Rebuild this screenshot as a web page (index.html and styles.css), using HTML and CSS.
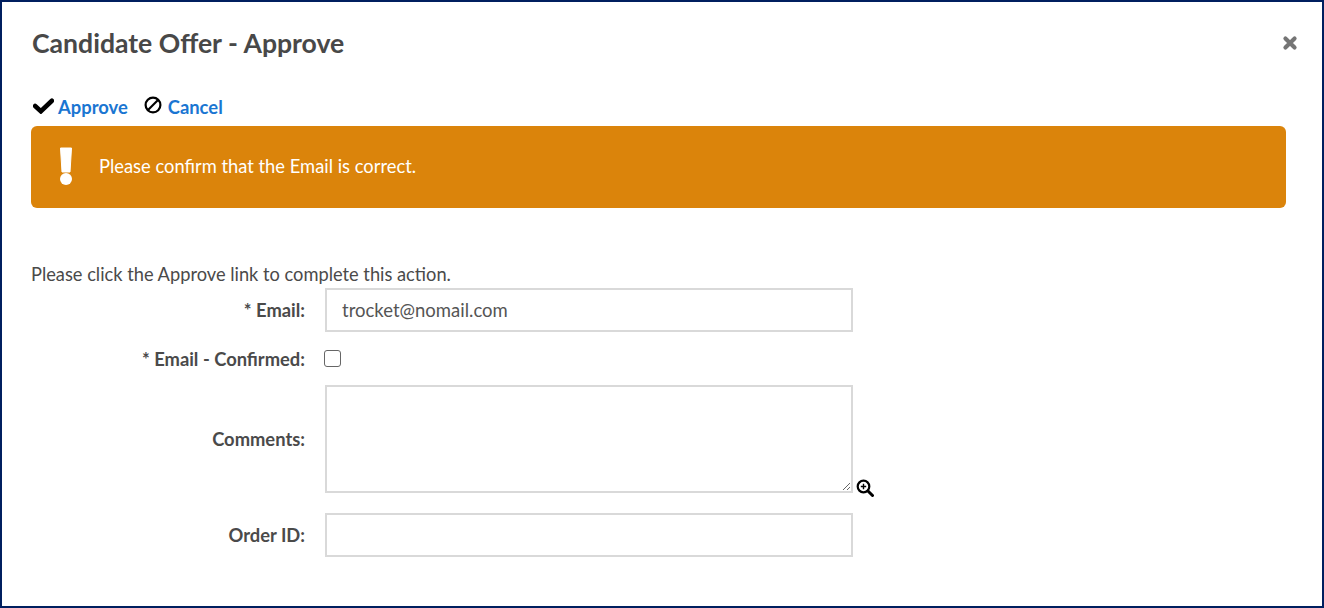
FILE: index.html
```html
<!DOCTYPE html>
<html lang="en">
<head>
<meta charset="utf-8">
<title>Candidate Offer - Approve</title>
<link rel="stylesheet" href="styles.css">
</head>
<body>
<div class="dialog">
  <header class="head">
    <h1 class="title">Candidate Offer - Approve</h1>
    <svg class="close" viewBox="0 0 14 14" aria-label="Close"><path d="M3 3l8 8M11 3l-8 8" fill="none" stroke="#757575" stroke-width="3.6" stroke-linecap="round"/></svg>
  </header>
  <nav class="actions">
    <svg class="ico-check" viewBox="0 0 20 16"><path d="M2 8.500l5.500 5L18 3.500" fill="none" stroke="#000" stroke-width="4.400" stroke-linejoin="miter" stroke-linecap="round"/></svg>
    <a class="link" href="#">Approve</a>
    <svg class="ico-cancel" viewBox="0 0 18 18"><circle cx="9" cy="9" r="7.400" fill="none" stroke="#000" stroke-width="2.200"/><path d="M4 14L14 4" stroke="#000" stroke-width="2.200"/></svg>
    <a class="link" href="#">Cancel</a>
  </nav>
  <div class="alert">
    <svg class="ico-warn" viewBox="0 0 14 38"><path d="M1.500 1h11l-1.500 24h-8z" fill="#fff" stroke="#fff" stroke-linejoin="round"/><circle cx="7" cy="32" r="6" fill="#fff"/></svg>
    <span class="alert-text">Please confirm that the Email is correct.</span>
  </div>
  <p class="note">Please click the Approve link to complete this action.</p>
  <form class="form">
    <label class="lab">* Email:</label>
    <input class="field" type="text" value="trocket@nomail.com">
    <label class="lab">* Email - Confirmed:</label>
    <div class="cell"><input class="check" type="checkbox"></div>
    <label class="lab">Comments:</label>
    <div class="area-cell">
      <textarea class="area"></textarea>
      <svg class="ico-zoom" viewBox="0 0 18 18"><circle cx="7.500" cy="7.500" r="5.800" fill="none" stroke="#000" stroke-width="2.200"/><path d="M12 12l4.500 4.500" stroke="#000" stroke-width="3" stroke-linecap="round"/><path d="M4.800 7.500h5.400M7.500 4.800v5.400" stroke="#000" stroke-width="1.400"/></svg>
    </div>
    <label class="lab lab-gap">Order ID:</label>
    <input class="field field-gap" type="text">
  </form>
</div>
</body>
</html>
```
FILE: styles.css
```css
* { box-sizing: border-box; }
html, body { margin: 0; padding: 0; background: #fff; }
.dialog {
  width: 1324px;
  height: 608px;
  border: 2px solid #001f5f;
  padding: 0 36px 0 29px;
  font-family: Lato, "Open Sans", sans-serif;
  color: #444;
  overflow: hidden;
}
.head {
  display: flex;
  justify-content: space-between;
  align-items: center;
  height: 84px;
  padding-bottom: 2px;
}
.title { margin: 0 0 0 1px; font-size: 26.600px; font-weight: 700; line-height: 32px; color: #484848; }
.close { width: 16px; height: 16px; margin-right: -12px; }
.actions { display: flex; align-items: center; height: 40px; padding-top: 2px; }
.ico-check { width: 21px; height: 17px; margin: -4px 4px 0 2px; }
.ico-cancel { width: 18px; height: 18px; margin: -4px 6px 0 16px; }
.link { color: #1a76d2; font-size: 18.400px; font-weight: 700; text-decoration: none; line-height: 22px; }
.alert {
  display: flex;
  align-items: center;
  width: 1255px;
  height: 82px;
  background: #db840b;
  border-radius: 6px;
  color: #fff;
  font-size: 18.350px;
  padding-left: 28px;
}
.alert-text { margin-top: -2px; }
.ico-warn { width: 14px; height: 38px; margin-right: 26px; margin-top: -2px; }
.note { margin: 54px 0 0; font-size: 18.250px; line-height: 24px; color: #4a4a4a; }
.form {
  display: grid;
  grid-template-columns: 274px 528px;
  column-gap: 20px;
  align-items: center;
  padding-top: 2px;
}
.lab { text-align: right; font-size: 18.350px; font-weight: 700; color: #4a4a4a; line-height: 22px; }
.field {
  width: 528px;
  height: 44px;
  border: 2px solid #d9d9d9;
  padding: 0 15px;
  font: 18.500px Lato, sans-serif;
  color: #555;
  background: #fff;
  outline: none;
}
.cell { height: 53px; display: flex; align-items: center; }
.check {
  appearance: none;
  width: 17px;
  height: 17px;
  margin: 0 0 0 -1px;
  border: 1.500px solid #666;
  border-radius: 3px;
  background: #fff;
}
.area-cell { position: relative; height: 108px; }
.area {
  display: block;
  width: 528px;
  height: 108px;
  border: 2px solid #d9d9d9;
  background: #fff;
  margin: 0;
  outline: none;
}
.ico-zoom { position: absolute; left: 531px; top: 94px; width: 18px; height: 18px; }
.lab-gap, .field-gap { margin-top: 20px; }
```
